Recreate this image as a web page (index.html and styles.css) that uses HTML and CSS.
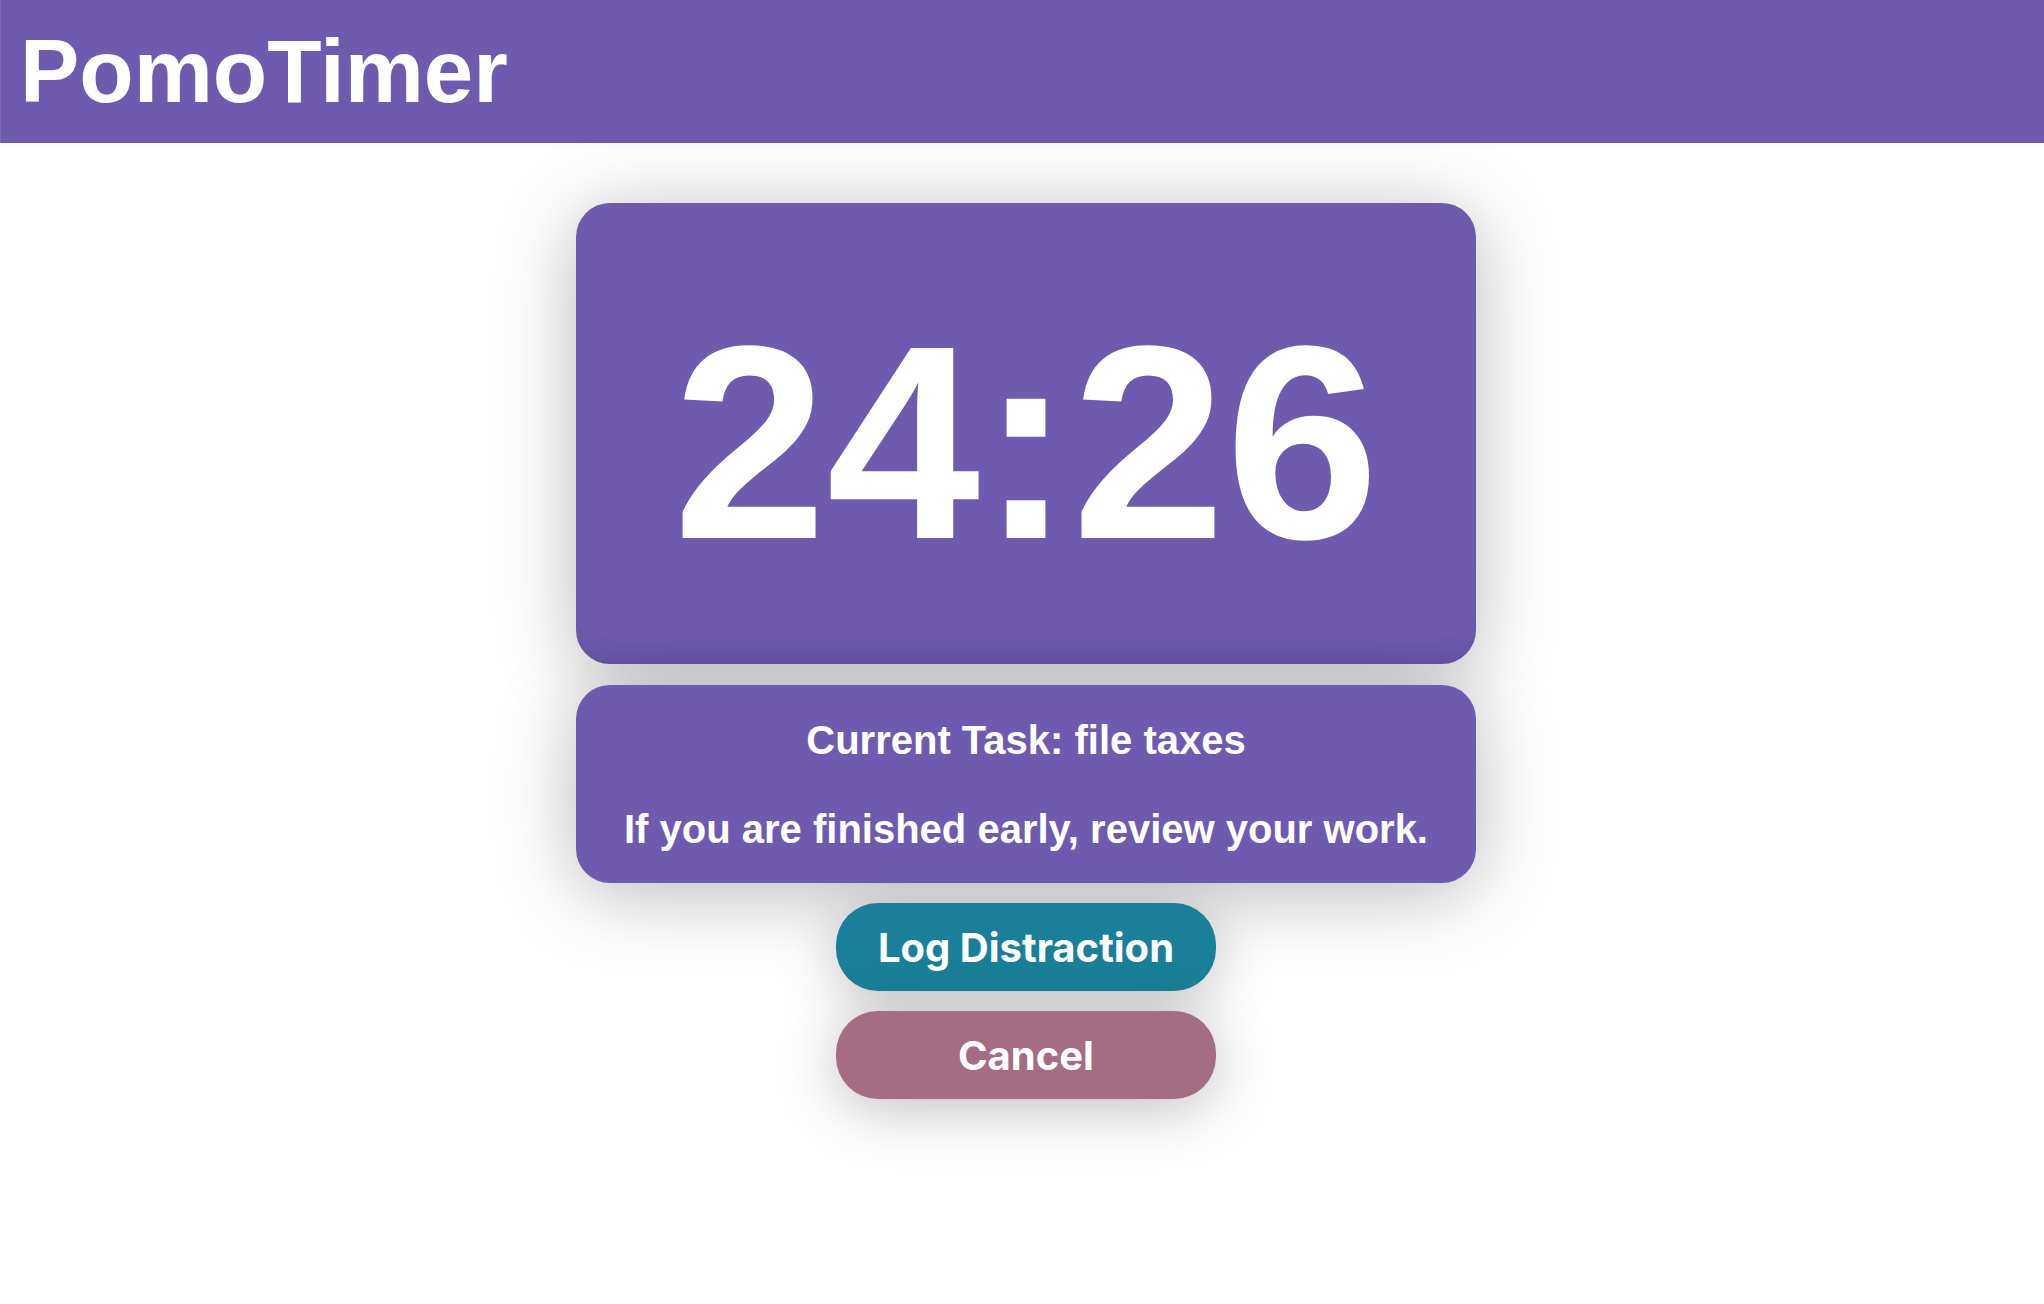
FILE: index.html
```html
<!DOCTYPE html>
<html lang="en">
<head>
<meta charset="utf-8">
<title>PomoTimer</title>
<link rel="stylesheet" href="styles.css">
</head>
<body>
<header class="app-header">
  <h1 class="app-title">PomoTimer</h1>
</header>
<main class="main">
  <section class="timer-card">
    <div class="timer-time">24:26</div>
  </section>
  <section class="task-card">
    <p class="task-line">Current Task: file taxes</p>
    <p class="task-line">If you are finished early, review your work.</p>
  </section>
  <button class="btn btn-log">Log Distraction</button>
  <button class="btn btn-cancel">Cancel</button>
</main>
</body>
</html>
```

FILE: styles.css
```css
html, body {
  margin: 0;
  padding: 0;
  background: #ffffff;
  font-family: "Liberation Sans", Arial, sans-serif;
}

body {
  min-height: 100vh;
}

.app-header {
  height: 143px;
  background: #6e5bb0;
  display: flex;
  align-items: center;
  padding-left: 19px;
  border-left: 1px solid #7a69b6;
  box-shadow: 0 2px 6px rgba(0, 0, 0, 0.04);
}

.app-title {
  margin: 0;
  color: #ffffff;
  font-size: 89px;
  font-weight: 700;
  line-height: 1.15;
}

.main {
  display: flex;
  flex-direction: column;
  align-items: center;
  padding: 60px 0 200px 8px;
}

.timer-card {
  width: 900px;
  box-sizing: border-box;
  height: 461px;
  padding-top: 81px;
  background: #6e5bb0;
  border-radius: 34px;
  box-shadow: 0 10px 80px rgba(0, 0, 0, 0.28), inset 0 -24px 30px -24px rgba(0, 0, 0, 0.12);
  text-align: center;
}

.timer-time {
  color: #ffffff;
  font-size: 276px;
  font-weight: 700;
  line-height: 1.15;
}

.task-card {
  width: 900px;
  box-sizing: border-box;
  margin-top: 21px;
  padding: 32px 20px 31px;
  background: #6e5bb0;
  border-radius: 34px;
  box-shadow: 0 10px 80px rgba(0, 0, 0, 0.28);
  display: flex;
  flex-direction: column;
  gap: 43px;
  text-align: center;
}

.task-line {
  margin: 0;
  color: #ffffff;
  font-size: 40px;
  font-weight: 700;
  line-height: 46px;
}

.btn {
  width: 380px;
  height: 88px;
  border: none;
  border-radius: 42px;
  color: #ffffff;
  font-family: Inter, "Liberation Sans", sans-serif;
  font-size: 40px;
  font-weight: 700;
  box-shadow: 0 10px 60px rgba(0, 0, 0, 0.25);
  cursor: pointer;
}

.btn-log {
  margin-top: 20px;
  background: #1a8099;
}

.btn-cancel {
  margin-top: 20px;
  background: #a56d84;
}
```
